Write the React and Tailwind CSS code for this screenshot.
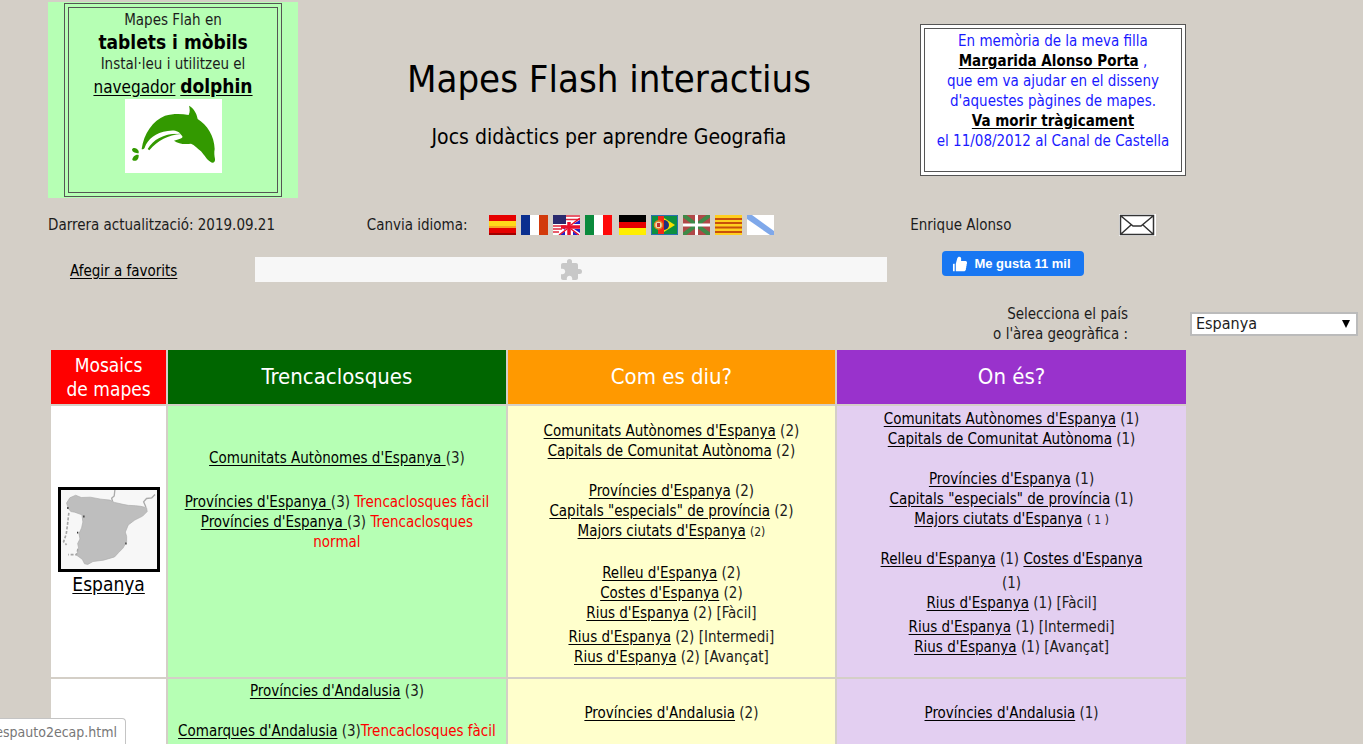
import React, { useState } from 'react';
import { MdExtension } from 'react-icons/md';
import { AiFillLike } from 'react-icons/ai';

const A = ({ children, className = '' }) => (
    <a href="#" className={`text-black underline underline-offset-2 ${className}`}>{children}</a>
);

const Gap = () => <div className="h-5" />;

const Red = ({ children }) => <span className="text-[#ff0000]">{children}</span>;

const Dolphin = () => (
    <svg viewBox="0 0 291 222" className="mx-auto block w-[97px] bg-white" aria-hidden="true">
        <g fill="#339900">
            <path d="M50 150C56 104 84 64 120 50C145 43 170 44 191 48C196 38 194 28 192 20C206 28 215 42 218 60C246 78 268 110 269 150C267 160 268 170 270 180C271 192 262 194 256 188C245 182 238 168 228 157C218 148 208 138 198 134C180 137 160 135 147 125C160 122 175 118 172 112C162 94 146 92 128 96C92 101 68 120 59 146C57 150 51 152 50 150Z" />
            <path d="M68 150C86 120 122 101 168 105C130 108 98 124 73 154Z" />
            <path d="M21 152C22 144 36 145 41 156L41 163C32 161 23 161 21 152ZM41 168C32 165 22 174 22 183C32 190 42 182 41 168Z" />
        </g>
        <path d="M62 148C76 118 114 98 160 102" fill="none" stroke="#fff" strokeWidth="4" />
    </svg>
);

const SpainMap = () => (
    <svg viewBox="0 0 294 242" className="mx-auto block w-[102px] border-[3px] border-black bg-[#f7f7f7]" aria-hidden="true">
        <path d="M165 0L163 18L155 25L158 35M288 14L278 24L262 26L253 36L260 52" fill="none" stroke="#aaa" strokeWidth="4" />
        <path d="M24 70L20 105L16 135L8 158L17 168M52 180L48 198L22 198" fill="none" stroke="#a5a5a5" strokeWidth="5" strokeDasharray="9 5" />
        <path d="M17 40L27 24L45 16L62 23L90 22L122 28L150 31L164 38L190 44L206 47L228 48L244 50L262 54L264 66L250 80L226 92L206 107L197 129L201 142L201 158L190 178L176 192L164 205L130 215L98 219L82 228L72 226L65 212L48 200L54 178L51 164L58 150L55 134L63 116L67 98L64 76L42 68L30 66L22 56Z" fill="#bebebe" stroke="#aaa" strokeWidth="2" />
        <path d="M21 52v6M70 78v6M51 128v5M199 161v6" stroke="#333" strokeWidth="4" />
    </svg>
);

const flags = [
    {
        name: 'Español',
        art: <><path fill="#e60000" d="M0 0h27v20H0z" /><path fill="#ffd91a" d="M0 6h27v7H0z" /><path fill="#f5a623" d="M0 11h27v2H0z" /><path fill="#a00000" d="M0 18h27v2H0z" /></>,
    },
    {
        name: 'Français',
        art: <><path fill="#fff" d="M0 0h27v20H0z" /><path fill="#0a2f8f" d="M0 0h9v20H0z" /><path fill="#d23a0c" d="M18 0h9v20h-9z" /></>,
    },
    {
        name: 'English',
        art: (
            <>
                <path fill="#fff" d="M0 0h27v20H0z" />
                <path stroke="#e0283c" strokeWidth="1.6" d="M13 1h14M13 4.500h14M0 11h13M0 14h9M0 17h6" />
                <path fill="#2a2a6e" d="M0 0h13v9H0z" />
                <path fill="#2222c8" d="M27 5v4h-7zM7 20l5-4v4zM12 12v3l-4-3zM20 16l5 4h-5zM27 14v4l-6-4z" />
                <path stroke="#e8102c" strokeWidth="3.500" d="M16 7v13M8 12h19" />
                <path stroke="#e8102c" strokeWidth="1.500" d="M18 10L27 3M14 14l-8 6M18 14l8 6" />
            </>
        ),
    },
    {
        name: 'Italiano',
        art: <><path fill="#fff" d="M0 0h27v20H0z" /><path fill="#0a8a3c" d="M0 0h9v20H0z" /><path fill="#ff0a0a" d="M18 0h9v20h-9z" /></>,
    },
    {
        name: 'Deutsch',
        art: <><path d="M0 0h27v7H0z" /><path fill="#e60000" d="M0 7h27v7H0z" /><path fill="#ffee00" d="M0 13h27v7H0z" /></>,
    },
    {
        name: 'Português',
        art: (
            <>
                <path fill="#0c9040" d="M0 0h27v20H0z" />
                <path fill="#f02818" d="M7 0h6v20H7z" />
                <path fill="#f5e000" d="M13 3l11 7-11 7z" />
                <path fill="#20307c" d="M13 5a5 5 0 010 10z" />
                <circle cx="7.500" cy="10" r="4" fill="#f0d8b0" stroke="#e08020" strokeWidth="1.500" />
                <path fill="#c03030" d="M6 8h3v4H6z" />
                <path fill="none" stroke="#2a70b0" d="M.5.500h26v19H.5z" />
            </>
        ),
    },
    {
        name: 'Euskara',
        art: (
            <>
                <path fill="#b04848" d="M0 0h27v20H0z" />
                <path stroke="#3f8a48" strokeWidth="4" d="M0 0l27 20M27 0L0 20" />
                <path stroke="#fff" strokeWidth="3" d="M13.500 0v20M0 10h27" />
            </>
        ),
    },
    {
        name: 'Català',
        art: <><path fill="#ffcf20" d="M0 0h27v20H0z" /><path stroke="#c8500a" strokeWidth="2" d="M0 4h27M0 8h27M0 12.500h27M0 17h27" /></>,
    },
    {
        name: 'Galego',
        art: <><path fill="#fff" d="M0 0h27v20H0z" /><path fill="#7fa8ea" d="M0 0h5l22 16v4h-4L0 4z" /></>,
    },
];

const Envelope = () => (
    <svg viewBox="0 0 37 22" className="block w-[37px]" fill="none" stroke="#333" strokeWidth="1.500" aria-hidden="true">
        <path fill="#fff" stroke="none" d="M0 0h37v22H0z" />
        <path d="M1.500 1.500h33v19h-33zM2 2l12 10h8L34 2M12 11L2 20M24 11l10 9" />
    </svg>
);

const headings = [
    { label: <>Mosaics<br />de mapes</>, style: 'bg-[#ff0000] text-[19px]' },
    { label: 'Trencaclosques', style: 'bg-[#006600] text-[22px]' },
    { label: 'Com es diu?', style: 'bg-[#ff9900] text-[22px]' },
    { label: 'On és?', style: 'bg-[#9932cc] text-[22px]' },
];

const App = () => {
    const [country, setCountry] = useState('Espanya');

    return (
        <div className="h-screen overflow-hidden bg-[#d4cfc7] font-['DejaVu_Sans_Condensed','DejaVu_Sans',sans-serif] text-[15px] leading-5 text-[#1c1c1c]">
            <div className="pl-12 pr-[177px]">
                <header className="flex items-start justify-between pt-[2px]">
                    <div className="w-[250px] bg-[#b6ffb4] px-4 py-px text-center">
                        <div className="border border-[#555] p-[3px]">
                            <div className="h-[186px] border border-[#555] pt-[2px]">
                                <div>Mapes Flah en</div>
                                <div className="text-[19px] leading-6 font-bold text-black">tablets i mòbils</div>
                                <div>Instal·leu i utilitzeu el</div>
                                <div className="text-[17px] leading-6">
                                    <A>navegador</A> <A className="text-[19px] leading-6 font-bold">dolphin</A>
                                </div>
                                <Dolphin />
                            </div>
                        </div>
                    </div>

                    <div className="pt-[53px] text-center text-black">
                        <h1 className="text-[38px] leading-12">Mapes Flash interactius</h1>
                        <p className="mt-5 text-[21px] leading-7">Jocs didàctics per aprendre Geografia</p>
                    </div>

                    <div className="mt-[22px] w-[266px] border border-[#555] bg-white p-[3px] text-center text-[#1a1aff]">
                        <div className="h-[144px] border border-[#555] pt-[2px]">
                            <div>En memòria de la meva filla</div>
                            <div><A className="font-bold">Margarida Alonso Porta</A> ,</div>
                            <div>que em va ajudar en el disseny</div>
                            <div>d'aquestes pàgines de mapes.</div>
                            <div><A className="font-bold">Va morir tràgicament</A></div>
                            <div>el 11/08/2012 al Canal de Castella</div>
                        </div>
                    </div>
                </header>

                <div className="mt-4 grid grid-cols-[319fr_544fr_276fr] items-center">
                    <div>Darrera actualització: 2019.09.21</div>
                    <div className="flex items-center">
                        <span className="w-[122px]">Canvia idioma:</span>
                        <div className="flex gap-[5px]">
                            {flags.map((f) => (
                                <a key={f.name} href="#" aria-label={f.name} className={f.name === 'Deutsch' ? 'ml-[2px]' : ''}>
                                    <svg viewBox="0 0 27 20" className="block w-[27px]">{f.art}</svg>
                                </a>
                            ))}
                        </div>
                    </div>
                    <div className="flex items-center justify-between pr-[30px]">
                        <span>Enrique Alonso</span>
                        <a href="#" aria-label="Correu"><Envelope /></a>
                    </div>
                </div>

                <div className="mt-[15px] flex items-start pl-[22px]">
                    <div className="w-[185px] pt-[10px]"><A>Afegir a favorits</A></div>
                    <div className="mt-[6px] flex h-[25px] flex-1 items-center justify-center bg-[#f7f7f7]">
                        <MdExtension className="h-6 w-6 text-[#c8c8c8]" />
                    </div>
                    <button type="button" className="mr-[102px] ml-[55px] flex h-[25px] w-[142px] items-center justify-center gap-[5px] rounded bg-[#1877f2] pr-1 font-['Liberation_Sans',sans-serif] text-[13px] font-bold text-white">
                        <AiFillLike className="h-[18px] w-[18px]" />
                        Me gusta 11 mil
                    </button>
                </div>
            </div>

            <div className="mt-[22px] flex items-center justify-end pr-[5px]">
                <label htmlFor="country" className="mr-[62px] text-right">
                    Selecciona el país<br />o l'àrea geogràfica :
                </label>
                <div className="relative w-[168px]">
                    <select
                        id="country"
                        value={country}
                        onChange={(e) => setCountry(e.target.value)}
                        className="block h-6 w-full appearance-none border-2 border-[#bbb] bg-white pl-1 text-base leading-5 text-[#1c1c1c]"
                    >
                        <option>Espanya</option>
                        <option>Andalusia</option>
                    </select>
                    <svg viewBox="0 0 8 8" className="pointer-events-none absolute top-2 right-2 w-2" aria-hidden="true">
                        <path d="M0 0h8L4 8z" />
                    </svg>
                </div>
            </div>

            <main className="pl-[49px] pr-[175px]">
                <table className="mt-1 w-full table-fixed border-separate border-spacing-[2px] text-center">
                    <colgroup>
                        <col className="w-[10.2%]" />
                        <col className="w-[29.9%]" />
                        <col className="w-[29%]" />
                        <col className="w-[30.9%]" />
                    </colgroup>
                    <thead>
                        <tr>
                            {headings.map((h, i) => (
                                <th key={i} className={`${h.style} py-[3px] leading-6 font-normal text-white`}>{h.label}</th>
                            ))}
                        </tr>
                    </thead>
                    <tbody>
                        <tr>
                            <td className="bg-white">
                                <SpainMap />
                                <A className="text-[19px] leading-6">Espanya</A>
                            </td>
                            <td className="bg-[#b6ffb4]">
                                <div><A>Comunitats Autònomes d'Espanya </A>(3)</div>
                                <div className="h-6" />
                                <div><A>Províncies d'Espanya </A>(3) <Red>Trencaclosques fàcil</Red></div>
                                <div><A>Províncies d'Espanya </A>(3) <Red>Trencaclosques<br />normal</Red></div>
                                <div className="h-[84px]" />
                            </td>
                            <td className="bg-[#ffffcc] pt-1">
                                <div><A>Comunitats Autònomes d'Espanya</A> (2)</div>
                                <div><A>Capitals de Comunitat Autònoma</A> (2)</div>
                                <Gap />
                                <div><A>Províncies d'Espanya</A> (2)</div>
                                <div><A>Capitals "especials" de província</A> (2)</div>
                                <div><A>Majors ciutats d'Espanya</A> <span className="text-xs">(2)</span></div>
                                <div className="h-[22px]" />
                                <div><A>Relleu d'Espanya</A> (2)</div>
                                <div><A>Costes d'Espanya</A> (2)</div>
                                <div><A>Rius d'Espanya</A> (2) [Fàcil]</div>
                                <div className="pt-1"><A>Rius d'Espanya</A> (2) [Intermedi]</div>
                                <div><A>Rius d'Espanya</A> (2) [Avançat]</div>
                            </td>
                            <td className="bg-[#e3cff1] px-8 pt-[3px]">
                                <div><A>Comunitats Autònomes d'Espanya</A> (1)</div>
                                <div><A>Capitals de Comunitat Autònoma</A> (1)</div>
                                <Gap />
                                <div><A>Províncies d'Espanya</A> (1)</div>
                                <div><A>Capitals "especials" de província</A> (1)</div>
                                <div><A>Majors ciutats d'Espanya</A> <span className="text-xs">( 1 )</span></div>
                                <Gap />
                                <div><A>Relleu d'Espanya</A> (1) <A>Costes d'Espanya</A></div>
                                <div className="pt-1">(1)</div>
                                <div><A>Rius d'Espanya</A> (1) [Fàcil]</div>
                                <div className="pt-1"><A>Rius d'Espanya</A> (1) [Intermedi]</div>
                                <div><A>Rius d'Espanya</A> (1) [Avançat]</div>
                                <Gap />
                            </td>
                        </tr>
                        <tr>
                            <td className="bg-white" />
                            <td className="bg-[#b6ffb4] pt-[2px]">
                                <div><A>Províncies d'Andalusia</A> (3)</div>
                                <Gap />
                                <div><A>Comarques d'Andalusia</A> (3)<Red>Trencaclosques fàcil</Red></div>
                                <Gap />
                            </td>
                            <td className="bg-[#ffffcc] pt-[6px]">
                                <div><A>Províncies d'Andalusia</A> (2)</div>
                                <Gap />
                            </td>
                            <td className="bg-[#e3cff1] pt-[6px]">
                                <div><A>Províncies d'Andalusia</A> (1)</div>
                                <Gap />
                            </td>
                        </tr>
                    </tbody>
                </table>
            </main>

            <div className="fixed bottom-0 left-0 flex h-[26px] w-[126px] items-center justify-end overflow-hidden rounded-tr border-t border-r border-[#c4c4c4] bg-white pr-2 text-sm text-[#777]">
                espauto2ecap.html
            </div>
        </div>
    );
};

export default App;
